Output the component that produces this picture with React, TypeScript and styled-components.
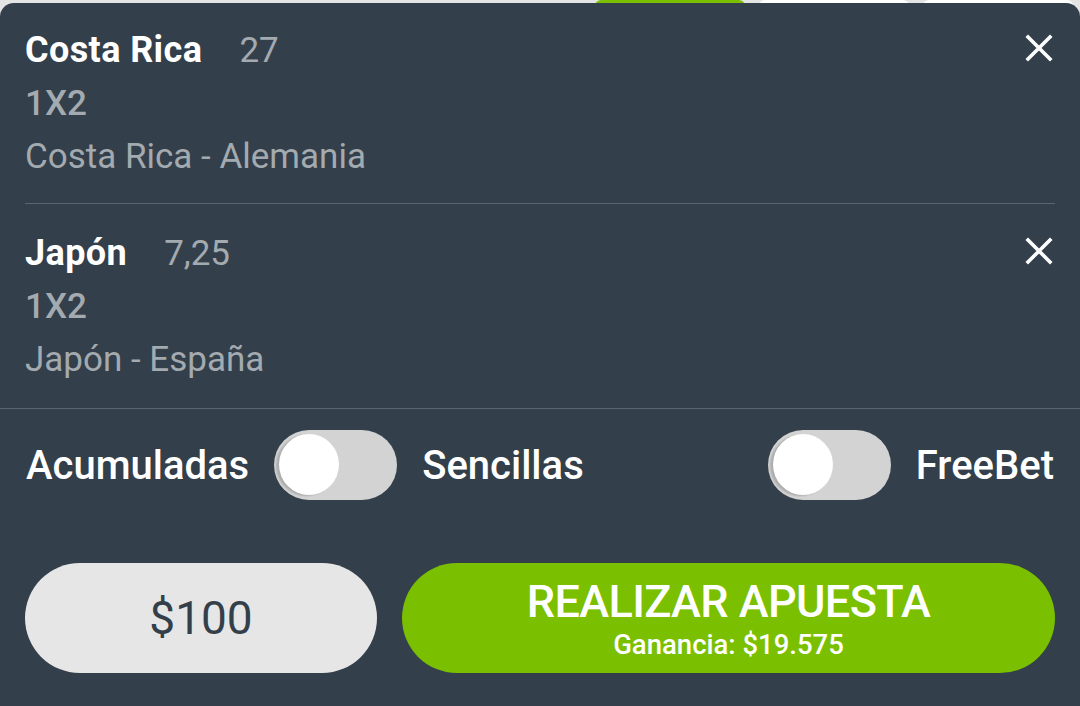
import React from "react";
import styled, { createGlobalStyle } from "styled-components";

const Global = createGlobalStyle`
  html, body { margin: 0; padding: 0; background: #e4e4e4; }
  body { font-family: Roboto, "Noto Sans", Arial, sans-serif; }
  * { box-sizing: border-box; }
`;

const Page = styled.div`
  width: 1080px;
  height: 706px;
  overflow: hidden;
  display: flex;
  flex-direction: column;
`;

const TabStrip = styled.div`
  height: 3px;
  display: flex;
  gap: 14px;
  padding-left: 595px;
`;

const Tab = styled.div<{ $active?: boolean }>`
  width: 150px;
  height: 10px;
  border-radius: 6px 6px 0 0;
  background: ${(p) => (p.$active ? "#7abf00" : "#ffffff")};
`;

const Panel = styled.div`
  position: relative;
  flex: 1;
  background: #333f4a;
  border-radius: 14px 14px 0 0;
  display: flex;
  flex-direction: column;
`;

const BetList = styled.div`
  border-bottom: 1.5px solid #5a656f;
`;

const BetItem = styled.div`
  margin: 0 25px;
  padding: 21px 0 20px 0;
  display: flex;
  align-items: flex-start;
  & + & {
    border-top: 1.5px solid #5a656f;
    padding-top: 23px;
    padding-bottom: 22px;
  }
`;

const Info = styled.div`
  flex: 1;
  display: flex;
  flex-direction: column;
`;

const Line = styled.div`
  height: 53px;
  line-height: 53px;
  font-size: 35px;
  white-space: nowrap;
`;

const Team = styled.span`
  font-weight: 700;
  font-size: 36px;
  letter-spacing: 0.4px;
  color: #ffffff;
  margin-right: 37px;
`;

const Odds = styled.span`
  font-weight: 400;
  color: #a3aab0;
`;

const Market = styled(Line)`
  font-weight: 500;
  color: #a3aab0;
`;

const Match = styled(Line)`
  font-weight: 400;
  color: #a3aab0;
`;

const Close = styled.button`
  background: none;
  border: none;
  padding: 0;
  margin-top: 9px;
  margin-right: 1px;
  width: 30px;
  height: 30px;
  cursor: pointer;
  display: flex;
`;

const ToggleRow = styled.div`
  margin-top: 21px;
  padding: 0 26px;
  height: 70px;
  display: flex;
  align-items: center;
  gap: 25px;
`;

const ToggleLabel = styled.span<{ $push?: boolean }>`
  font-size: 40px;
  font-weight: 500;
  color: #ffffff;
  margin-right: ${(p) => (p.$push ? "auto" : "0")};
`;

const Track = styled.div`
  width: 123px;
  height: 70px;
  border-radius: 35px;
  background: #d3d3d3;
  padding: 4px 0 0 5px;
  flex-shrink: 0;
`;

const Knob = styled.div`
  width: 60px;
  height: 61px;
  border-radius: 50%;
  background: #ffffff;
  box-shadow: -3px 1px 2px rgba(0, 0, 0, 0.18);
`;

const ButtonRow = styled.div`
  margin-top: 63px;
  padding: 0 25px;
  display: flex;
  gap: 25px;
`;

const Amount = styled.button`
  width: 352px;
  height: 110px;
  border-radius: 55px;
  border: none;
  background: #e6e6e6;
  color: #333f4a;
  font-family: Roboto, sans-serif;
  font-size: 46px;
  font-weight: 400;
  padding: 0;
`;

const PlaceBet = styled.button`
  flex: 1;
  height: 110px;
  border-radius: 55px;
  border: none;
  background: #7abf00;
  color: #ffffff;
  font-family: Roboto, sans-serif;
  display: flex;
  flex-direction: column;
  align-items: center;
  justify-content: center;
  padding: 0;
`;

const PlaceTitle = styled.span`
  font-size: 45px;
  font-weight: 500;
  letter-spacing: -0.6px;
  line-height: 53px;
`;

const PlaceSub = styled.span`
  font-size: 27.5px;
  font-weight: 500;
  line-height: 33px;
`;

const XIcon = () => (
  <svg width="30" height="30" viewBox="0 0 30 30">
    <path d="M4 4 L26 26 M26 4 L4 26" stroke="#ffffff" strokeWidth="3.6" strokeLinecap="square" />
  </svg>
);

const bets = [
  { team: "Costa Rica", odds: "27", market: "1X2", match: "Costa Rica - Alemania" },
  { team: "Japón", odds: "7,25", market: "1X2", match: "Japón - España" },
];

export default function App() {
  return (
    <Page>
      <Global />
      <TabStrip>
        <Tab $active />
        <Tab />
        <Tab />
      </TabStrip>
      <Panel>
        <BetList>
          {bets.map((b) => (
            <BetItem key={b.team}>
              <Info>
                <Line>
                  <Team>{b.team}</Team>
                  <Odds>{b.odds}</Odds>
                </Line>
                <Market>{b.market}</Market>
                <Match>{b.match}</Match>
              </Info>
              <Close aria-label="Eliminar">
                <XIcon />
              </Close>
            </BetItem>
          ))}
        </BetList>
        <ToggleRow>
          <ToggleLabel>Acumuladas</ToggleLabel>
          <Track>
            <Knob />
          </Track>
          <ToggleLabel $push>Sencillas</ToggleLabel>
          <Track>
            <Knob />
          </Track>
          <ToggleLabel>FreeBet</ToggleLabel>
        </ToggleRow>
        <ButtonRow>
          <Amount>$100</Amount>
          <PlaceBet>
            <PlaceTitle>REALIZAR APUESTA</PlaceTitle>
            <PlaceSub>Ganancia: $19.575</PlaceSub>
          </PlaceBet>
        </ButtonRow>
      </Panel>
    </Page>
  );
}
